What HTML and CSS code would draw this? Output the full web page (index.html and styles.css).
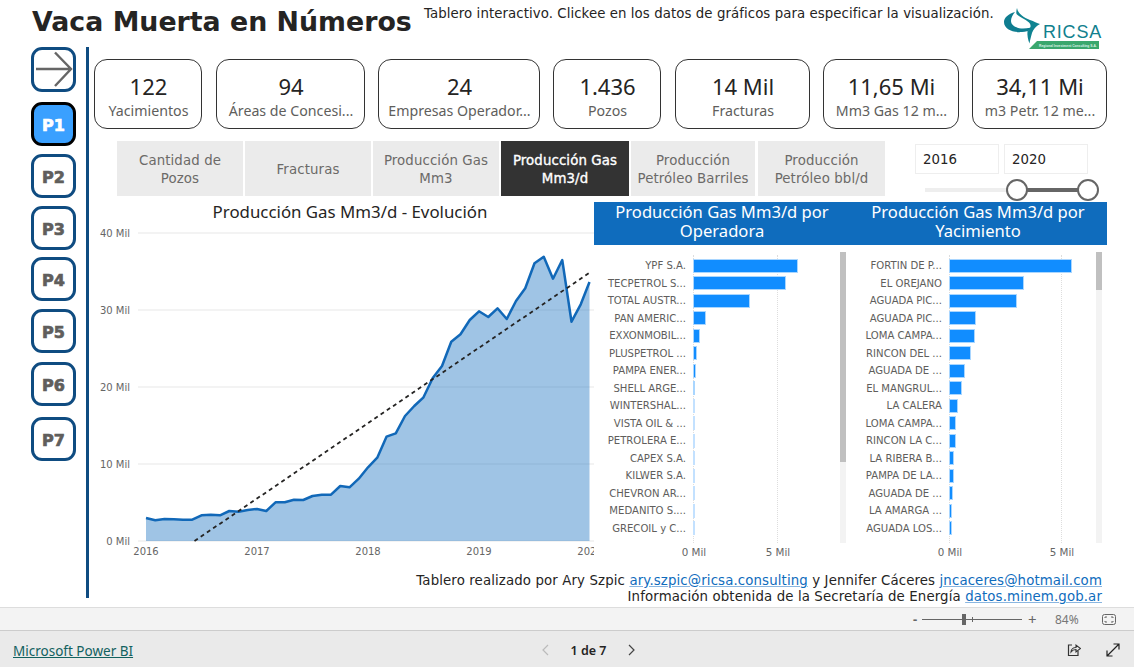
FILE: index.html
```html
<!DOCTYPE html>
<html lang="es">
<head>
<meta charset="utf-8">
<title>Vaca Muerta en Números</title>
<link rel="stylesheet" href="styles.css">
</head>
<body>
<div class="app">
  <main class="canvas">
    <header class="top">
      <h1 class="title">Vaca Muerta en Números</h1>
      <p class="subtitle">Tablero interactivo. Clickee en los datos de gráficos para especificar la visualización.</p>
      <svg class="logo" width="102" height="42" viewBox="0 0 102 42">
        <path d="M13 5C6 7 2 11 2 15C2 22 11 26 20 25C27 24.500 32 21.500 35 18C30 20.500 26 21.500 21 21.500C14 21.500 9 18 9 14C9 11 10.500 8 13 5Z" fill="#0f7d90"/>
        <path d="M15 1C16 7 22 10.500 28 13C32 14.500 35 16 38 17C34 19 31 22.500 30 26C29 30 28 33 27.500 36.500C26 33 25 28 25.500 24C29 21.500 29.500 18 27 15.500C23 12 17 10 14.500 7C14 5 14.500 3 15 1Z" fill="#0f8391"/>
        <path d="M27 42L35 34H97V42Z" fill="#3aa76d"/>
        <text class="logo-name" x="41" y="30.500">RICSA</text>
        <text class="logo-tag" x="37" y="39.500">Regional Investment Consulting S.A.</text>
      </svg>
    </header>
    <div class="body">
      <nav class="nav">
        <a class="nav-btn nav-arrow"><svg width="37" height="37" viewBox="0 0 37 37"><path d="M0 18H34M19 1.500L35 18L19 35" fill="none" stroke="#666" stroke-width="2.400"/></svg></a>
        <a class="nav-btn nav-active n1">P1</a>
        <a class="nav-btn n2">P2</a>
        <a class="nav-btn n3">P3</a>
        <a class="nav-btn n4">P4</a>
        <a class="nav-btn n5">P5</a>
        <a class="nav-btn n6">P6</a>
        <a class="nav-btn n7">P7</a>
      </nav>
      <div class="content">
        <section class="kpis">
          <div class="kpi k1"><b>122</b><span>Yacimientos</span></div>
          <div class="kpi k2"><b>94</b><span>Áreas de Concesi...</span></div>
          <div class="kpi k3"><b>24</b><span>Empresas Operador...</span></div>
          <div class="kpi k4"><b>1.436</b><span>Pozos</span></div>
          <div class="kpi k5"><b>14 Mil</b><span>Fracturas</span></div>
          <div class="kpi k6"><b>11,65 Mi</b><span>Mm3 Gas 12 m...</span></div>
          <div class="kpi k7"><b>34,11 Mi</b><span>m3 Petr. 12 me...</span></div>
        </section>
        <section class="controls">
          <div class="tabs">
            <div class="tab">Cantidad de Pozos</div>
            <div class="tab">Fracturas</div>
            <div class="tab">Producción Gas Mm3</div>
            <div class="tab tab-active">Producción Gas Mm3/d</div>
            <div class="tab tab-narrow">Producción Petróleo Barriles</div>
            <div class="tab">Producción Petróleo bbl/d</div>
          </div>
          <div class="range">
            <div class="range-inputs"><span class="range-box">2016</span><span class="range-box">2020</span></div>
            <div class="slider"><i class="slider-fill"></i><i class="knob knob-a"></i><i class="knob knob-b"></i></div>
          </div>
        </section>
        <section class="charts">
          <div class="area-panel">
            <h2 class="area-title">Producción Gas Mm3/d - Evolución</h2>
            <svg class="area-chart" width="510" height="348" viewBox="0 0 510 348">
              <g class="grid-h">
                <path d="M54 10H510M54 87H510M54 164H510M54 241H510M54 318H510"/>
              </g>
              <g class="axis">
                <text x="46" y="14" text-anchor="end">40 Mil</text>
                <text x="46" y="91" text-anchor="end">30 Mil</text>
                <text x="46" y="168" text-anchor="end">20 Mil</text>
                <text x="46" y="245" text-anchor="end">10 Mil</text>
                <text x="46" y="322" text-anchor="end">0 Mil</text>
                <text x="62" y="332" text-anchor="middle">2016</text>
                <text x="173" y="332" text-anchor="middle">2017</text>
                <text x="284" y="332" text-anchor="middle">2018</text>
                <text x="395" y="332" text-anchor="middle">2019</text>
                <text x="506" y="332" text-anchor="middle">2020</text>
              </g>
              <path class="area-fill" d="M62 318V295L71.250 297.300L80.500 296L89.750 296.300L99 296.700L108.250 296.700L117.500 292.300L126.750 291.700L136 292.300L145.250 288L154.500 288.700L163.750 287L173 286L182.250 288L191.500 279.300L200.750 279.300L210 276.700L219.250 277L228.500 273L237.750 271.700L247 271.700L256.250 263L265.500 264.300L274.750 255.700L284 244.300L293.250 234.700L302.500 213.700L311.750 210.300L321 193L330.250 183L339.500 174.300L348.750 155L358 143L367.250 118.700L376.500 111.300L385.750 97L395 88.300L404.250 94L413.500 85.300L422.750 96L432 78L441.250 65.300L450.500 40.300L459.750 33.700L469 55.700L478.250 37L487.500 98.700L496.750 81.300L505.500 59V318Z"/>
              <path class="area-line" d="M62 295L71.250 297.300L80.500 296L89.750 296.300L99 296.700L108.250 296.700L117.500 292.300L126.750 291.700L136 292.300L145.250 288L154.500 288.700L163.750 287L173 286L182.250 288L191.500 279.300L200.750 279.300L210 276.700L219.250 277L228.500 273L237.750 271.700L247 271.700L256.250 263L265.500 264.300L274.750 255.700L284 244.300L293.250 234.700L302.500 213.700L311.750 210.300L321 193L330.250 183L339.500 174.300L348.750 155L358 143L367.250 118.700L376.500 111.300L385.750 97L395 88.300L404.250 94L413.500 85.300L422.750 96L432 78L441.250 65.300L450.500 40.300L459.750 33.700L469 55.700L478.250 37L487.500 98.700L496.750 81.300L505.500 59"/>
              <path class="area-trend" d="M110.500 318L505.500 49.700"/>
            </svg>
          </div>
          <div class="bars-panel">
            <div class="bars-head">
              <h2>Producción Gas Mm3/d por Operadora</h2>
              <h2>Producción Gas Mm3/d por Yacimiento</h2>
            </div>
            <div class="bars-cols">
              <div class="bars bars-a">
                <i class="vgrid vg0"></i><i class="vgrid vg1"></i>
                <div class="row"><span>YPF S.A.</span><i style="width:105px"></i></div>
                <div class="row"><span>TECPETROL S...</span><i style="width:93px"></i></div>
                <div class="row"><span>TOTAL AUSTR...</span><i style="width:57px"></i></div>
                <div class="row"><span>PAN AMERIC...</span><i style="width:13px"></i></div>
                <div class="row"><span>EXXONMOBIL...</span><i style="width:7px"></i></div>
                <div class="row"><span>PLUSPETROL ...</span><i style="width:4px"></i></div>
                <div class="row"><span>PAMPA ENER...</span><i style="width:3px"></i></div>
                <div class="row"><span>SHELL ARGE...</span><i style="width:2px"></i></div>
                <div class="row pale"><span>WINTERSHAL...</span><i style="width:2px"></i></div>
                <div class="row pale"><span>VISTA OIL &amp; ...</span><i style="width:2px"></i></div>
                <div class="row pale"><span>PETROLERA E...</span><i style="width:2px"></i></div>
                <div class="row pale"><span>CAPEX S.A.</span><i style="width:2px"></i></div>
                <div class="row pale"><span>KILWER S.A.</span><i style="width:2px"></i></div>
                <div class="row pale"><span>CHEVRON AR...</span><i style="width:2px"></i></div>
                <div class="row pale"><span>MEDANITO S....</span><i style="width:2px"></i></div>
                <div class="row pale"><span>GRECOIL y C...</span><i style="width:2px"></i></div>
                <div class="bar-axis"><span class="tick t0">0 Mil</span><span class="tick t1">5 Mil</span></div>
                <div class="scroll"><i class="thumb-a"></i></div>
              </div>
              <div class="bars bars-b">
                <i class="vgrid vg0"></i><i class="vgrid vg1"></i>
                <div class="row"><span>FORTIN DE P...</span><i style="width:123px"></i></div>
                <div class="row"><span>EL OREJANO</span><i style="width:75px"></i></div>
                <div class="row"><span>AGUADA PIC...</span><i style="width:68px"></i></div>
                <div class="row"><span>AGUADA PIC...</span><i style="width:27px"></i></div>
                <div class="row"><span>LOMA CAMPA...</span><i style="width:26px"></i></div>
                <div class="row"><span>RINCON DEL ...</span><i style="width:22px"></i></div>
                <div class="row"><span>AGUADA DE ...</span><i style="width:16px"></i></div>
                <div class="row"><span>EL MANGRUL...</span><i style="width:13px"></i></div>
                <div class="row"><span>LA CALERA</span><i style="width:9px"></i></div>
                <div class="row"><span>LOMA CAMPA...</span><i style="width:7px"></i></div>
                <div class="row"><span>RINCON LA C...</span><i style="width:6.500px"></i></div>
                <div class="row"><span>LA RIBERA B...</span><i style="width:5px"></i></div>
                <div class="row"><span>PAMPA DE LA...</span><i style="width:5px"></i></div>
                <div class="row"><span>AGUADA DE ...</span><i style="width:3.500px"></i></div>
                <div class="row"><span>LA AMARGA ...</span><i style="width:3px"></i></div>
                <div class="row"><span>AGUADA LOS...</span><i style="width:3px"></i></div>
                <div class="bar-axis"><span class="tick t0">0 Mil</span><span class="tick t1">5 Mil</span></div>
                <div class="scroll"><i class="thumb-b"></i></div>
              </div>
            </div>
          </div>
        </section>
        <section class="credits">
          <p>Tablero realizado por Ary Szpic <a>ary.szpic@ricsa.consulting</a> y Jennifer Cáceres <a>jncaceres@hotmail.com</a></p>
          <p>Información obtenida de la Secretaría de Energía <a>datos.minem.gob.ar</a></p>
        </section>
      </div>
    </div>
  </main>
  <div class="zoombar">
    <span class="zb-sign">-</span>
    <span class="zb-track"><i class="zb-tick"></i><i class="zb-thumb"></i></span>
    <span class="zb-sign zb-plus">+</span>
    <span class="zb-pct">84%</span>
    <svg width="14" height="11" viewBox="0 0 14 11"><rect x="0.500" y="0.500" width="13" height="10" rx="2" fill="none" stroke="#666"/><path d="M3 4V3H5M9 3H11V4M11 7V8H9M5 8H3V7" fill="none" stroke="#666"/></svg>
  </div>
  <footer class="footer">
    <a class="pbi">Microsoft Power BI</a>
    <div class="pager">
      <svg width="10" height="12" viewBox="0 0 10 12"><path d="M7 1L2 6L7 11" fill="none" stroke="#bbb" stroke-width="1.200"/></svg>
      <span class="pager-text">1 de 7</span>
      <svg width="10" height="12" viewBox="0 0 10 12"><path d="M3 1L8 6L3 11" fill="none" stroke="#444" stroke-width="1.200"/></svg>
    </div>
    <div class="foot-icons">
      <svg width="14" height="14" viewBox="0 0 14 14"><path d="M5 2H1.500V12.500H11V8" fill="none" stroke="#333" stroke-width="1.200"/><path d="M4 9C4 6 6.500 4.500 9 4.500V2L13.500 5.500L9 9V6.500C7 6.500 5 7.500 4 9Z" fill="none" stroke="#333" stroke-width="1.100"/></svg>
      <svg width="14" height="14" viewBox="0 0 14 14"><path d="M1 13L13 1M7.500 1H13V6.500M1 7.500V13H6.500" fill="none" stroke="#222" stroke-width="1.200"/></svg>
    </div>
  </footer>
</div>
</body>
</html>
```
FILE: styles.css
```css
* { box-sizing: border-box; }
html, body { margin: 0; padding: 0; }
body { font-family: "DejaVu Sans", sans-serif; color: #252423; background: #fff; overflow: hidden; }
h1, h2, p { margin: 0; font-weight: normal; }
i { display: block; }

.app { width: 1134px; height: 667px; display: flex; flex-direction: column; }
.canvas { height: 607px; overflow: hidden; flex: none; }

.top { height: 47px; display: flex; align-items: flex-start; padding-left: 32px; }
.title { font-size: 26.800px; font-weight: 700; line-height: 32px; margin-top: 6px; color: #252423; white-space: nowrap; width: 392px; }
.subtitle { font-size: 13.330px; letter-spacing: .07px; line-height: 16px; margin-top: 6px; white-space: nowrap; width: 578px; }
.logo { margin-top: 7px; flex: none; }
.logo-name { font-family: "Liberation Sans", sans-serif; font-size: 18px; fill: #11808e; letter-spacing: .8px; }
.logo-tag { font-family: "Liberation Sans", sans-serif; font-size: 3.300px; font-weight: 700; fill: #dff3e6; }

.body { display: flex; height: 560px; }
.nav { width: 58px; margin-left: 31px; height: 551px; border-right: 3px solid #0f4c81; flex: none; display: flex; flex-direction: column; align-items: flex-start; }
.nav-btn { width: 45px; height: 44px; border: 3px solid #0f4c81; border-radius: 11px; background: #fff; color: #605e5c; font: 700 16px/42px "DejaVu Sans", sans-serif; -webkit-text-stroke: .7px #605e5c; text-align: center; display: block; flex: none; }
.nav-arrow { height: 45px; padding: 1px 2px; line-height: 0; }
.nav-active { background: #3aa0ff; border-color: #000; color: #fff; -webkit-text-stroke: .7px #fff; }
.n1 { margin-top: 10px; }
.n2 { margin-top: 8px; }
.n3 { margin-top: 8px; }
.n4 { margin-top: 7px; }
.n5 { margin-top: 8px; }
.n6 { margin-top: 9px; }
.n7 { margin-top: 11px; }

.content { flex: 1; min-width: 0; }

.kpis { display: flex; padding: 12px 0 0 5px; height: 94px; }
.kpi { height: 70px; border: 1px solid #333; border-radius: 13px; display: flex; flex-direction: column; align-items: center; flex: none; padding: 12px 0 0 1px; font-family: "Noto Sans", sans-serif; }
.kpi b { font-weight: 400; font-size: 22px; line-height: 28px; color: #252423; white-space: nowrap; }
.kpi span { font-size: 14.200px; line-height: 20px; margin-top: 1px; color: #605e5c; white-space: nowrap; }
.k1 { width: 108px; }
.k2 { width: 149px; margin-left: 14px; }
.k3 { width: 162px; margin-left: 13px; }
.k4 { width: 108px; margin-left: 13px; }
.k5 { width: 135px; margin-left: 14px; }
.k6 { width: 136px; margin-left: 13px; }
.k7 { width: 135px; margin-left: 13px; }

.controls { display: flex; height: 61px; padding-left: 28px; }
.tabs { display: flex; gap: 2px; height: 55px; width: 768px; flex: none; }
.tab { width: 126px; flex: none; background: #ebebeb; color: #6b6a68; font-size: 13.330px; letter-spacing: .11px; line-height: 18px; display: flex; align-items: center; justify-content: center; text-align: center; padding: 2px 4px 0; }
.tab-active { background: #333; color: #fff; -webkit-text-stroke: .35px #fff; width: 128px; }
.tab-narrow { width: 124px; margin-right: 1px; }
.tab:last-child { width: 127px; }
.range { margin-left: 30px; width: 190px; }
.range-inputs { display: flex; gap: 5px; margin-top: 3px; }
.range-box { width: 84px; height: 30px; border: 1px solid #eee; font-size: 13.330px; line-height: 30px; padding-left: 7px; color: #252423; }
.slider { position: relative; height: 4px; width: 173px; margin: 14px 0 0 10px; background: #eee; }
.slider-fill { position: absolute; left: 92px; right: 10px; top: 0; height: 4px; background: #666; }
.knob { position: absolute; top: -9px; width: 22px; height: 22px; border-radius: 50%; border: 2px solid #666; background: #fff; }
.knob-a { left: 81px; }
.knob-b { left: 152px; }

.charts { display: flex; height: 375px; }
.area-panel { width: 505px; flex: none; }
.area-title { font: 400 16.850px/20px "Noto Sans", sans-serif; color: #252423; text-align: center; padding-left: 17px; height: 21px; white-space: nowrap; }
.area-chart { display: block; margin-left: -5px; overflow: hidden; }
.grid-h path { stroke: #efefef; stroke-width: 1.500; fill: none; }
.axis text { font: 400 10px "DejaVu Sans", sans-serif; fill: #666; }
.area-fill { fill: #0f6cbd; fill-opacity: .4; }
.area-line { fill: none; stroke: #1168b8; stroke-width: 2.500; stroke-linejoin: round; }
.area-trend { fill: none; stroke: #252423; stroke-width: 1.800; stroke-dasharray: 4 3.500; }

.bars-panel { width: 513px; flex: none; }
.bars-head { background: #0f6cbd; height: 43px; display: flex; color: #fff; }
.bars-head h2 { width: 256px; font: 400 16.600px/19px "Noto Sans", sans-serif; text-align: center; padding: 0 18px; }
.bars-cols { display: flex; padding-top: 7px; }
.bars { width: 256px; position: relative; height: 291px; padding-top: 5px; }
.row { display: flex; align-items: center; height: 17.500px; position: relative; }
.row span { width: 92px; flex: none; text-align: right; font-size: 10.100px; color: #605e5c; white-space: nowrap; margin-right: 7px; }
.row i { height: 14px; background: #118dff; border: 1px solid #a9d6ff; }
.pale i { background: #c3e1ff; border: 0; }
.vgrid { position: absolute; top: 3px; height: 288px; width: 0; border-left: 1px dotted #ddd; }
.vg0 { left: 99px; }
.vg1 { left: 183px; }
.bars-b .vg1 { left: 211px; }
.bar-axis { position: relative; height: 14px; margin-top: 9px; font-size: 10.300px; color: #666; }
.tick { position: absolute; top: 0; transform: translateX(-50%); white-space: nowrap; }
.t0 { left: 100px; }
.t1 { left: 184px; }
.bars-b .t1 { left: 212px; }
.scroll { position: absolute; left: 246px; top: 0; width: 6px; height: 291px; background: #f3f3f3; }
.thumb-a { height: 210px; background: #c0c0c0; }
.thumb-b { height: 38px; background: #c0c0c0; }

.credits { margin-top: -4px; padding-right: 32px; text-align: right; font-size: 13.330px; letter-spacing: .12px; line-height: 16px; white-space: nowrap; }
.credits a { color: #0f6cbd; text-decoration: underline; text-decoration-color: #8ab6e0; }

.zoombar { height: 24px; background: #f3f3f3; border-top: 1px solid #ddd; border-bottom: 1px solid #ccc; display: flex; align-items: center; padding-left: 913px; color: #666; flex: none; }
.zb-sign { width: 7px; font: 700 13px "Noto Sans", sans-serif; }
.zb-plus { margin-left: 6px; width: 12px; font-weight: 400; font-size: 15px; }
.zb-track { position: relative; width: 100px; height: 1px; background: #666; margin-left: 2px; }
.zb-thumb { position: absolute; left: 40px; top: -5px; width: 4px; height: 11px; background: #666; }
.zb-tick { position: absolute; left: 50px; top: -2px; width: 1px; height: 5px; background: #666; }
.zb-pct { margin-left: 15px; width: 47px; font: 400 12px "Noto Sans", sans-serif; color: #777; }

.footer { flex: 1; background: #eaeaea; display: flex; align-items: center; padding: 2px 0 0 13px; }
.pbi { font: 400 13.500px "Noto Sans", sans-serif; color: #12615f; text-decoration: underline; width: 528px; white-space: nowrap; margin-top: 2px; }
.pager { display: flex; align-items: center; width: 95px; justify-content: space-between; }
.pager-text { font: 600 12.500px "Noto Sans", sans-serif; color: #252423; }
.foot-icons { display: flex; gap: 25px; margin-left: 431px; }
```
